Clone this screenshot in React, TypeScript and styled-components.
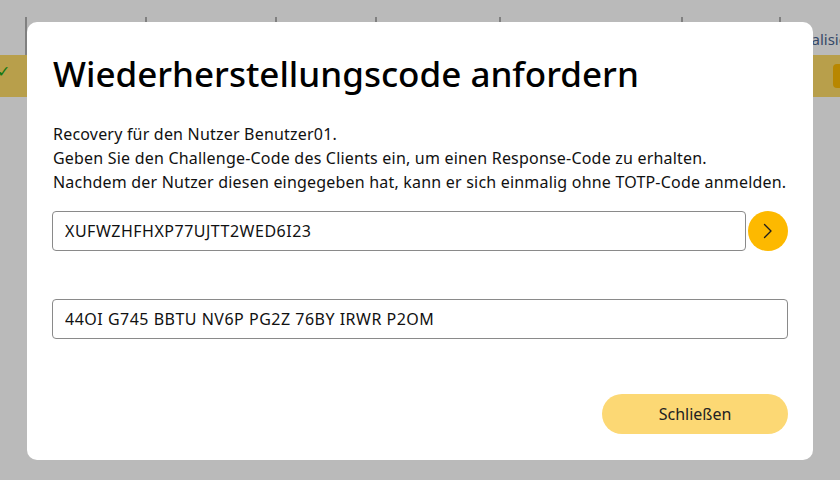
import React from 'react';
import styled, { createGlobalStyle } from 'styled-components';

const GlobalStyle = createGlobalStyle`
  html, body {
    margin: 0;
    padding: 0;
    background: #ffffff;
    font-family: "Noto Sans", "Open Sans", sans-serif;
  }
`;

const columns = [25, 120, 130, 100, 124, 182, 98, 61];

function App() {
  return (
    <Page>
      <GlobalStyle />
      <Background>
        <HeaderRow>
          {columns.map((w, i) => (
            <HeaderCell key={i} style={{ width: w }}>
              {i === columns.length - 1 ? 'Initialisiert' : ''}
            </HeaderCell>
          ))}
        </HeaderRow>
        <DataRow>
          <Check>✓</Check>
          <RowButton />
        </DataRow>
      </Background>
      <Overlay>
        <Dialog>
          <Title>Wiederherstellungscode anfordern</Title>
          <Text>
            Recovery für den Nutzer Benutzer01.
            <br />
            Geben Sie den Challenge-Code des Clients ein, um einen Response-Code zu erhalten.
            <br />
            Nachdem der Nutzer diesen eingegeben hat, kann er sich einmalig ohne TOTP-Code anmelden.
          </Text>
          <InputRow>
            <Field defaultValue="XUFWZHFHXP77UJTT2WED6I23" />
            <RoundButton aria-label="Senden">
              <svg width="14" height="20" viewBox="0 0 14 20" fill="none">
                <path d="M3.5 3.5 L10 10 L3.5 16.5" stroke="#1e1e1e" strokeWidth="1.4" strokeLinecap="round" strokeLinejoin="round" />
              </svg>
            </RoundButton>
          </InputRow>
          <InputRow $top={48}>
            <Field defaultValue="44OI G745 BBTU NV6P PG2Z 76BY IRWR P2OM" readOnly />
          </InputRow>
          <Footer>
            <CloseButton>Schließen</CloseButton>
          </Footer>
        </Dialog>
      </Overlay>
    </Page>
  );
}

export default App;

const Page = styled.div`
  width: 840px;
  height: 480px;
  position: relative;
  overflow: hidden;
`;

const Background = styled.div`
  display: flex;
  flex-direction: column;
  padding-top: 17px;
`;

const HeaderRow = styled.div`
  display: flex;
  height: 38px;
`;

const HeaderCell = styled.div`
  border-left: 2px solid #b0b0b0;
  box-sizing: border-box;
  flex-shrink: 0;
  font-size: 15px;
  color: #4a6490;
  padding: 12px 0 0 3px;
  white-space: nowrap;
  overflow: hidden;
  &:first-child {
    border-left: none;
  }
`;

const DataRow = styled.div`
  height: 42px;
  background: #fddb68;
  display: flex;
  align-items: center;
  justify-content: space-between;
`;

const Check = styled.span`
  color: #1aa51a;
  font-size: 16px;
  margin-left: -3px;
  margin-top: -10px;
`;

const RowButton = styled.div`
  width: 14px;
  height: 24px;
  border-radius: 4px 0 0 4px;
  background: #fdb900;
  margin-right: -7px;
`;

const Overlay = styled.div`
  position: absolute;
  inset: 0;
  background: rgba(0, 0, 0, 0.27);
`;

const Dialog = styled.div`
  position: absolute;
  left: 27px;
  top: 22px;
  width: 786px;
  height: 438px;
  box-sizing: border-box;
  background: #ffffff;
  border-radius: 10px;
  padding: 30px 25px 0 25px;
  display: flex;
  flex-direction: column;
`;

const Title = styled.h1`
  margin: 0;
  font-size: 35px;
  font-weight: 500;
  line-height: 44px;
  color: #000;
  padding-left: 1px;
`;

const Text = styled.p`
  margin: 26px 0 0 0;
  font-size: 16px;
  letter-spacing: 0.2px;
  line-height: 24px;
  color: #111;
  padding-left: 1px;
  white-space: nowrap;
`;

const InputRow = styled.div<{ $top?: number }>`
  display: flex;
  align-items: center;
  gap: 2px;
  margin-top: ${(p) => p.$top ?? 17}px;
`;

const Field = styled.input`
  flex: 1;
  height: 40px;
  box-sizing: border-box;
  border: 1px solid #8a8a8a;
  border-radius: 4px;
  padding: 0 12px;
  font-family: "Noto Sans", "Open Sans", sans-serif;
  font-size: 16px;
  letter-spacing: 0.5px;
  color: #111;
  outline: none;
  background: #fff;
`;

const RoundButton = styled.button`
  width: 40px;
  height: 40px;
  border-radius: 50%;
  border: none;
  background: #fdb900;
  display: flex;
  align-items: center;
  justify-content: center;
  padding: 0;
  flex-shrink: 0;
  cursor: pointer;
`;

const Footer = styled.div`
  display: flex;
  justify-content: flex-end;
  margin-top: 55px;
`;

const CloseButton = styled.button`
  width: 186px;
  height: 40px;
  border-radius: 20px;
  border: none;
  background: #fcd874;
  font-family: "Noto Sans", "Open Sans", sans-serif;
  font-size: 16px;
  color: #222;
  cursor: pointer;
`;
